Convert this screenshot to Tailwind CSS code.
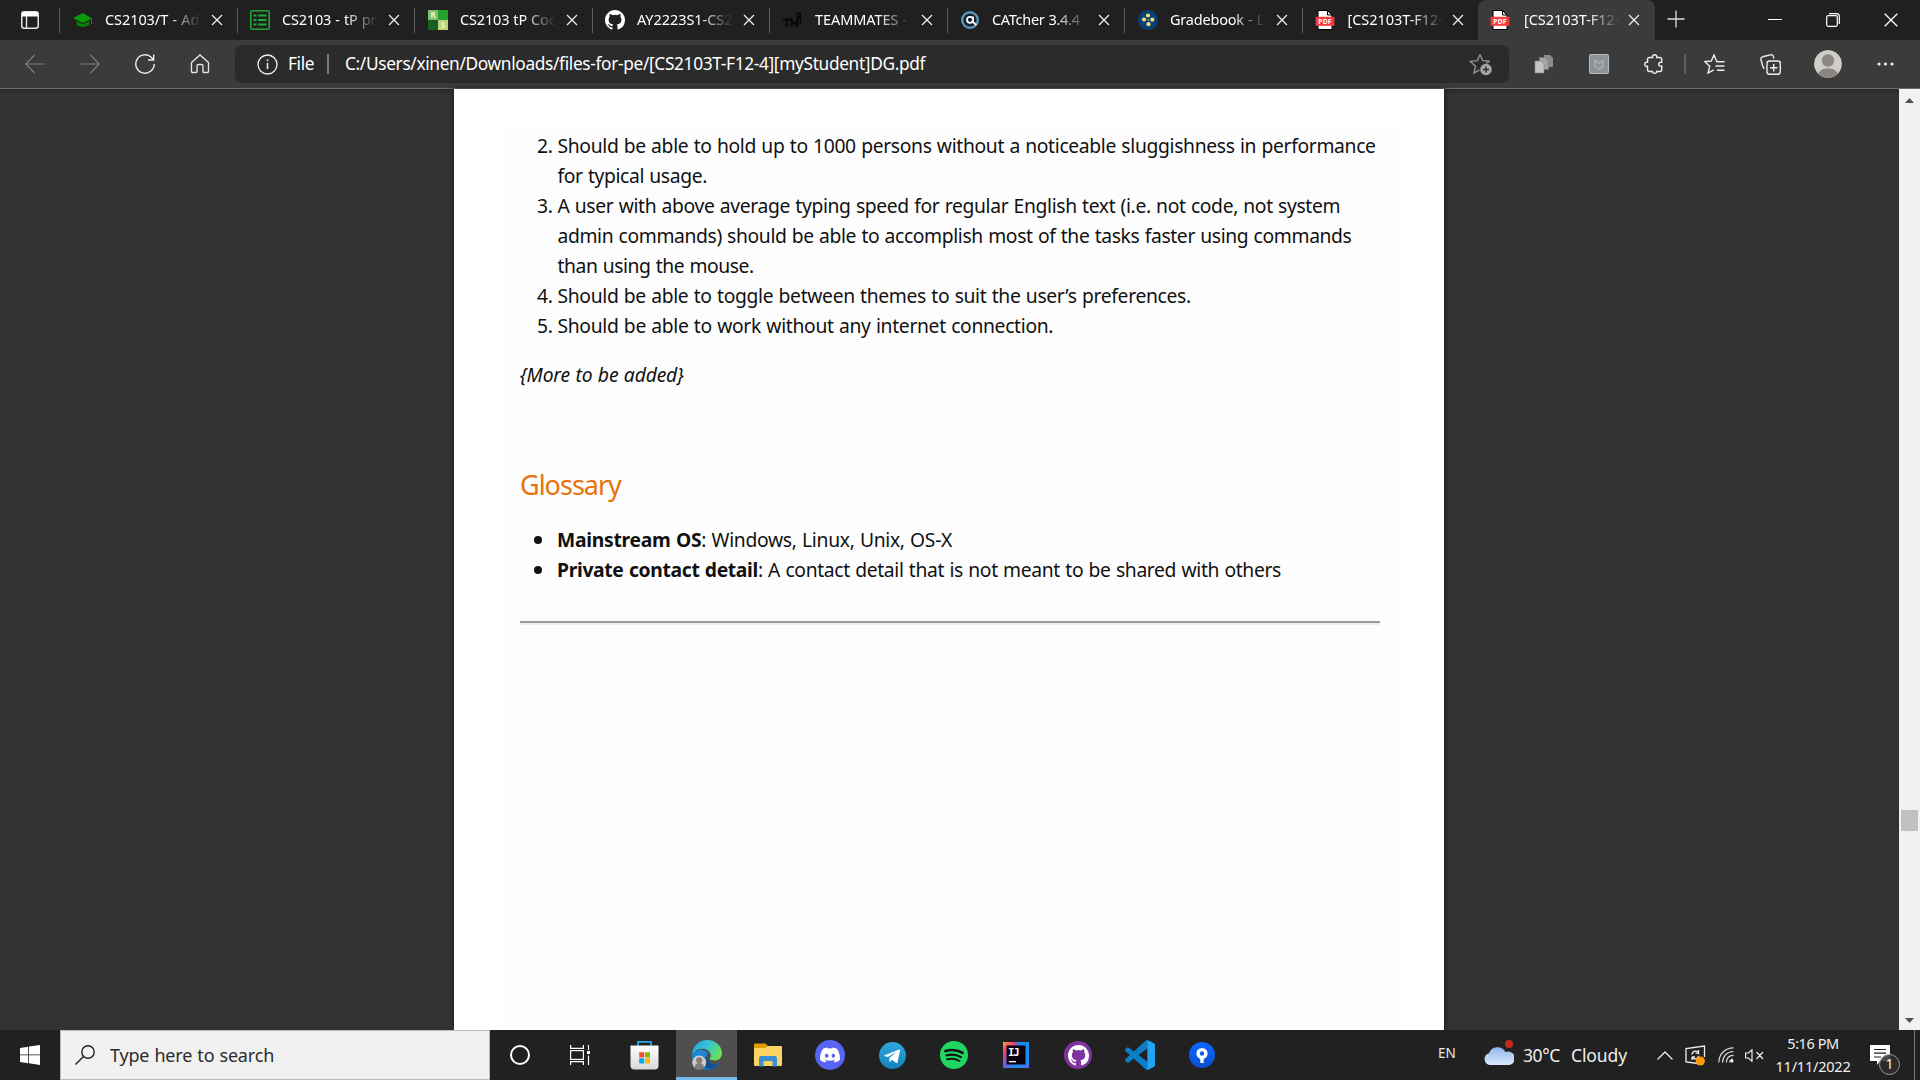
<!DOCTYPE html>
<html lang="en">
<head>
<meta charset="utf-8">
<title>[CS2103T-F12-4][myStudent]DG.pdf</title>
<script src="https://cdn.jsdelivr.net/npm/@tailwindcss/browser@4"></script>
</head>
<body class="w-[1920px] h-[1080px] overflow-hidden flex flex-col bg-[#333] font-['Noto_Sans',sans-serif] text-white">

<!-- shared symbols -->
<svg class="hidden">
  <symbol id="x" viewBox="0 0 12 12"><path d="M1 1l10 10M11 1L1 11" stroke="#eee" stroke-width="1.3" fill="none"/></symbol>
  <symbol id="octocat" viewBox="0 0 16 16"><path d="M8 0C3.58 0 0 3.58 0 8c0 3.54 2.29 6.53 5.47 7.59.4.07.55-.17.55-.38 0-.19-.01-.82-.01-1.49-2.01.37-2.53-.49-2.69-.94-.09-.23-.48-.94-.82-1.13-.28-.15-.68-.52-.01-.53.63-.01 1.08.58 1.23.82.72 1.21 1.87.87 2.33.66.07-.52.28-.87.51-1.07-1.78-.2-3.64-.89-3.64-3.95 0-.87.31-1.59.82-2.15-.08-.2-.36-1.02.08-2.12 0 0 .67-.21 2.2.82a7.6 7.6 0 014 0c1.53-1.04 2.2-.82 2.2-.82.44 1.1.16 1.92.08 2.12.51.56.82 1.27.82 2.15 0 3.07-1.87 3.75-3.65 3.95.29.25.54.73.54 1.48 0 1.07-.01 1.93-.01 2.2 0 .21.15.46.55.38A8.01 8.01 0 0016 8c0-4.42-3.58-8-8-8z" fill="currentColor"/></symbol>
  <symbol id="pdf" viewBox="0 0 20 20">
    <path d="M3 .5h9.5L17 5v14.5H3z" fill="#fff" stroke="#000"/><path d="M12.500.5V5H17z" fill="#ddd" stroke="#000"/>
    <rect x=".6" y="6.800" width="18.800" height="9" fill="#fb3b3b"/>
    <text x="10" y="13.700" font-size="6.700" font-weight="700" fill="#fff" text-anchor="middle" letter-spacing=".3" font-family="Noto Sans">PDF</text>
  </symbol>
</svg>

<!-- tab strip -->
<header class="h-10 shrink-0 bg-[#202020] flex">
  <div class="w-[59px] flex items-center justify-center">
    <svg class="w-[18px] h-[18px]" viewBox="0 0 18 18"><rect x=".75" y=".75" width="16.5" height="16.5" rx="2.5" fill="none" stroke="#e6e6e6" stroke-width="1.5"/><path d="M1 2.5A2 2 0 013 1h12a2 2 0 012 1.500V5.500H1z" fill="#fff"/><path d="M5.500 5v12.500" stroke="#e6e6e6" stroke-width="1.400"/></svg>
  </div>
  <nav class="flex text-[14.5px] leading-[20px] whitespace-nowrap">
    <div class="w-[177.5px] flex items-center">
      <span class="w-px h-[25px] bg-[#5c5c5c]"></span>
      <svg class="ml-[13px] w-5 h-5 shrink-0" viewBox="0 0 20 20"><path d="M10 3L0 8l10 5 8-4v5h1V8.500z" fill="#0a9a0a"/><path d="M3.500 11v3.500c3 3.200 10 3.200 13 0V11L10 14.300z" fill="#087c08"/></svg>
      <span class="ml-3 pb-0.5 w-[96px] overflow-hidden tracking-[-0.08px] [word-spacing:0.6px] mask-r-from-65% mask-r-to-100%">CS2103/T - Ad</span>
      <svg class="ml-[10px] w-3 h-3"><use href="#x"/></svg>
    </div>
    <div class="w-[177.5px] flex items-center">
      <span class="w-px h-[25px] bg-[#5c5c5c]"></span>
      <svg class="ml-[12.500px] w-5 h-5 shrink-0" viewBox="0 0 20 20" fill="none" stroke="#1fa83a" stroke-width="1.500"><rect x=".75" y=".75" width="18.500" height="18.500" rx="1"/><path d="M3.500 5.500h3M8 5.500h8.500M3.500 10h3M8 10h8.500M3.500 14.500h3M8 14.500h8.500" stroke-width="1.800"/></svg>
      <span class="ml-3 pb-0.5 w-[96px] overflow-hidden tracking-[-0.2px] [word-spacing:0.6px] mask-r-from-65% mask-r-to-100%">CS2103 - tP pr</span>
      <svg class="ml-[10px] w-3 h-3"><use href="#x"/></svg>
    </div>
    <div class="w-[177.5px] flex items-center">
      <span class="w-px h-[25px] bg-[#5c5c5c]"></span>
      <svg class="ml-[13px] w-5 h-5 shrink-0" viewBox="0 0 20 20"><rect width="10" height="10" fill="#7fbf6c"/><rect x="10" width="10" height="10" fill="#27a02e"/><rect y="10" width="10" height="10" fill="#175f22"/><rect x="10" y="10" width="10" height="10" fill="#b9d57a"/><g font-size="8" font-weight="700" fill="#e4f5d8" text-anchor="middle" font-family="Noto Sans"><text x="5" y="8">R</text><text x="15" y="18">S</text></g></svg>
      <span class="ml-3 pb-0.5 w-[96px] overflow-hidden tracking-[-0.16px] [word-spacing:0.4px] mask-r-from-65% mask-r-to-100%">CS2103 tP Coc</span>
      <svg class="ml-[10px] w-3 h-3"><use href="#x"/></svg>
    </div>
    <div class="w-[177.5px] flex items-center">
      <span class="w-px h-[25px] bg-[#5c5c5c]"></span>
      <svg class="ml-[12.500px] w-5 h-5 shrink-0"><use href="#octocat"/></svg>
      <span class="ml-3 pb-0.5 w-[96px] overflow-hidden tracking-[-0.06px] mask-r-from-65% mask-r-to-100%">AY2223S1-CS2</span>
      <svg class="ml-[10px] w-3 h-3"><use href="#x"/></svg>
    </div>
    <div class="w-[177.5px] flex items-center">
      <span class="w-px h-[25px] bg-[#5c5c5c]"></span>
      <svg class="ml-[13px] w-5 h-5 shrink-0" viewBox="0 0 20 20"><g fill="none" stroke="#060606" stroke-width="1.900"><path d="M0 9.500h7.500M3.700 9.500V17M8.500 17V10l3 4.500 3-4.500v7"/><circle cx="16" cy="5" r="1.700" stroke-width="1.500"/><path d="M13 9.300c1.500-1.600 4.500-1.600 6 0M17.500 9v5" stroke-width="1.300"/></g></svg>
      <span class="ml-3 pb-0.5 w-[96px] overflow-hidden tracking-[-0.08px] [word-spacing:0.6px] mask-r-from-65% mask-r-to-100%">TEAMMATES -</span>
      <svg class="ml-[10px] w-3 h-3"><use href="#x"/></svg>
    </div>
    <div class="w-[177.5px] flex items-center">
      <span class="w-px h-[25px] bg-[#5c5c5c]"></span>
      <svg class="ml-[12.500px] w-5 h-5 shrink-0" viewBox="0 0 20 20"><circle cx="10" cy="10" r="7.800" fill="#16222b" stroke="#5b96bd" stroke-width="2.400"/><g fill="none" stroke="#fff" stroke-width="1.800"><circle cx="10" cy="9.800" r="3"/><path d="M13 6.500V12l3.300 3"/></g></svg>
      <span class="ml-3 pb-0.5 w-[96px] overflow-hidden tracking-[-0.3px] [word-spacing:0.6px] mask-r-from-65% mask-r-to-100%">CATcher 3.4.4 -</span>
      <svg class="ml-[10px] w-3 h-3"><use href="#x"/></svg>
    </div>
    <div class="w-[177.5px] flex items-center">
      <span class="w-px h-[25px] bg-[#5c5c5c]"></span>
      <svg class="ml-[13px] w-5 h-5 shrink-0" viewBox="0 0 20 20"><circle cx="10" cy="10" r="10" fill="#073e7c"/><g fill="#f6dc63"><circle cx="10" cy="5.500" r="2.100"/><circle cx="6" cy="9.500" r="2.100"/><circle cx="14.300" cy="9.700" r="2.100"/><circle cx="10.500" cy="14.200" r="2.100"/><circle cx="10.200" cy="10" r=".7"/></g></svg>
      <span class="ml-3 pb-0.5 w-[96px] overflow-hidden tracking-[-0.2px] [word-spacing:0.6px] mask-r-from-65% mask-r-to-100%">Gradebook - L</span>
      <svg class="ml-[10px] w-3 h-3"><use href="#x"/></svg>
    </div>
    <div class="w-[176.500px] flex items-center">
      <span class="w-px h-[25px] bg-[#5c5c5c]"></span>
      <svg class="ml-[12px] w-5 h-5 shrink-0"><use href="#pdf"/></svg>
      <span class="ml-[13px] pb-0.5 w-[96px] overflow-hidden tracking-[-0.05px] mask-r-from-65% mask-r-to-100%">[CS2103T-F12-</span>
      <svg class="ml-[8.500px] w-3 h-3"><use href="#x"/></svg>
    </div>
    <div class="w-[177px] flex items-center bg-[#3b3b3b] rounded-t-lg">
      <svg class="ml-[12px] w-5 h-5 shrink-0"><use href="#pdf"/></svg>
      <span class="ml-[14px] pb-0.5 w-[96px] overflow-hidden tracking-[-0.05px] mask-r-from-65% mask-r-to-100%">[CS2103T-F12-</span>
      <svg class="ml-[8px] w-3 h-3"><use href="#x"/></svg>
    </div>
  </nav>
  <svg class="ml-[12px] mt-[10px] w-[18px] h-[18px]" viewBox="0 0 18 18" stroke="#ddd" stroke-width="1.300"><path d="M9 .5v17M.5 9h17"/></svg>
  <div class="ml-auto flex items-center pr-[22px] gap-[44px]">
    <svg class="w-[14px] h-[14px]" viewBox="0 0 14 14"><path d="M0 6.500h14" stroke="#fff" stroke-width="1"/></svg>
    <svg class="w-[14px] h-[14px]" viewBox="0 0 14 14" fill="none" stroke="#fff" stroke-width="1.200"><rect x=".7" y="2.700" width="10.600" height="10.600" rx="1.500"/><path d="M3 .7h7.500A2.800 2.800 0 0113.300 3.500V11"/></svg>
    <svg class="w-[14px] h-[14px]" viewBox="0 0 14 14" stroke="#fff" stroke-width="1.300"><path d="M.7.7l12.600 12.600M13.300.7L.7 13.300"/></svg>
  </div>
</header>

<!-- toolbar -->
<div class="h-[49px] shrink-0 bg-[#3b3b3b] border-b border-[#6b6b6b] flex items-center">
  <div class="flex pl-[7.5px] w-[235px] shrink-0">
    <div class="w-[55px] flex justify-center"><svg class="w-5 h-5" viewBox="0 0 20 20" fill="none" stroke="#7d7d7d" stroke-width="1.200"><path d="M20 10H.8M9.500 1L.8 10l8.700 9"/></svg></div>
    <div class="w-[55px] flex justify-center"><svg class="w-5 h-5" viewBox="0 0 20 20" fill="none" stroke="#7d7d7d" stroke-width="1.200"><path d="M0 10h19.200M10.500 1l8.700 9-8.700 9"/></svg></div>
    <div class="w-[55px] flex justify-center"><svg class="w-5 h-5" viewBox="0 0 20 20" fill="none" stroke="#eee" stroke-width="1.400"><path d="M19.200 10A9.200 9.200 0 1 1 16.500 3.500L18.500 5.700M18.700 .5V6H13"/></svg></div>
    <div class="w-[55px] flex justify-center"><svg class="w-5 h-5" viewBox="0 0 20 20" fill="none" stroke="#e4e4e4" stroke-width="1.400"><path d="M1.500 8.500L10 1l8.500 7.500V17.500a1 1 0 01-1 1h-3.500a1 1 0 01-1-1V12a1.500 1.500 0 00-1.500-1.500h-3A1.500 1.500 0 007 12v5.500a1 1 0 01-1 1H2.500a1 1 0 01-1-1z"/></svg></div>
  </div>
  <div class="w-[1274px] h-[38px] shrink-0 rounded-[6px] bg-[#2b2b2b] flex items-center text-[17.3px] whitespace-nowrap">
    <svg class="ml-[22px] w-[21px] h-[21px]" viewBox="0 0 21 21" fill="none" stroke="#eee" stroke-width="1.300"><circle cx="10.500" cy="10.500" r="9.500"/><path d="M10.500 9v6M10.500 5.500v1.800" stroke-width="1.500"/></svg>
    <span class="ml-[10px] w-[39px] tracking-[-0.35px]">File</span>
    <span class="w-[2px] h-5 bg-[#777]"></span>
    <span class="ml-[16px] tracking-[-0.34px]">C:/Users/xinen/Downloads/files-for-pe/[CS2103T-F12-4][myStudent]DG.pdf</span>
    <svg class="ml-auto mr-[17px] w-[23px] h-[23px]" viewBox="0 0 23 23"><path d="M11 1.500l2.700 6.200 7 .5M11 1.500L8.300 7.700l-7 .7 5.200 4.800-1.600 7 5.500-3.300M17 10.500l3.700-2.300" fill="none" stroke="#9a9a9a" stroke-width="1.300"/><circle cx="17" cy="16.500" r="5.800" fill="#a5a5a5"/><path d="M17 13.500v6M14 16.500h6" stroke="#2b2b2b" stroke-width="1.400"/></svg>
  </div>
  <div class="flex items-center pl-[7.5px]">
    <div class="w-[55px] flex justify-center"><svg class="w-5 h-5" viewBox="0 0 20 20"><path d="M10 1h6l3 3v9h-9z" fill="#8b8b8b"/><path d="M5.500 3.500h6l3 3v9h-9z" fill="#a2a2a2" stroke="#777" stroke-width=".6"/><path d="M1 7h6l3 3v9H1z" fill="#c4c4c4" stroke="#888" stroke-width=".6"/></svg></div>
    <div class="w-[55px] flex justify-center"><svg class="w-5 h-5" viewBox="0 0 20 20"><rect x=".5" y=".5" width="19" height="19" rx="1" fill="#8e9396" stroke="#b5babd"/><path d="M6 6.500l4 2.500 4-2.500v6L10 15l-4-2.500z" fill="none" stroke="#a6aeb2" stroke-width="1.500"/></svg></div>
    <div class="w-[55px] flex justify-center"><svg class="w-5 h-5" viewBox="0 0 20 20" fill="none" stroke="#eee" stroke-width="1.400"><path d="M5.500 3.500h3c-.8-3.600 5-3.600 4.200 0h3a2 2 0 012 2v2.800c-4-.8-4 4.600 0 3.800v3.400a2 2 0 01-2 2h-3c.6 2.300-4.800 2.300-4.200 0h-3a2 2 0 01-2-2v-3.200c-3.800.8-3.800-4.900 0-4.100V5.500a2 2 0 012-2z"/></svg></div>
    <span class="w-[2px] h-5 ml-[2px] bg-[#5e5e5e]"></span>
    <div class="w-[56px] ml-px flex justify-center"><svg class="w-[21px] h-5" viewBox="0 0 21 20" fill="none" stroke="#eee" stroke-width="1.400"><path d="M13.500 7.300L12.500 7 10 1 7.300 7l-6.500.6 4.900 4.700L4 19l5.700-3.200M12.500 7.700h8M11.500 12h9M13 16.300h7.500"/></svg></div>
    <div class="w-[55px] flex justify-center"><svg class="w-[21px] h-[21px]" viewBox="0 0 21 21" fill="none" stroke="#eee" stroke-width="1.400"><rect x="7" y="7" width="13.300" height="13.300" rx="2.500"/><path d="M13.700 10v7.500M10 13.700h7.500M4.500 14.500c-1-.5-1.300-1-1.600-2L.9 5.500C.6 4 1.200 3.200 2.500 2.800L10.500.9c1.500-.4 2.500.2 2.800 1.500l.6 2.100"/></svg></div>
    <div class="w-[60px] flex justify-center"><svg class="w-7 h-7" viewBox="0 0 28 28"><defs><clipPath id="av"><circle cx="14" cy="14" r="14"/></clipPath></defs><g clip-path="url(#av)"><circle cx="14" cy="14" r="14" fill="#d0cdc9"/><circle cx="14" cy="10.500" r="6.200" fill="#8c8783"/><path d="M3 28c0-13 22-13 22 0z" fill="#8c8783"/></g></svg></div>
    <div class="w-[55px] flex justify-center"><svg class="w-[17px] h-1" viewBox="0 0 17 4" fill="#eee"><circle cx="2" cy="2" r="1.600"/><circle cx="8.500" cy="2" r="1.600"/><circle cx="15" cy="2" r="1.600"/></svg></div>
  </div>
</div>

<!-- document viewer -->
<main class="flex-1 min-h-0 flex">
  <div class="w-[454px] shrink-0 shadow-[inset_0_4px_5px_-3px_#252525]"></div>
  <article class="w-[990px] bg-white pt-[41px] pl-[47px] shadow-[0_0_6px_#1c1c1c]">
    <div class="w-[898px] h-full bg-[#fdfdfd] pl-[19px] pt-px text-[19.3px] leading-[30px] text-[#111] whitespace-nowrap [word-spacing:0.65px]">
      <ol class="flex flex-col">
        <li class="flex"><span class="w-[37.500px] pl-[17px] tracking-[-0.3px]">2.</span><div><p class="tracking-[-0.335px]">Should be able to hold up to 1000 persons without a noticeable sluggishness in performance</p><p class="tracking-[-0.37px]">for typical usage.</p></div></li>
        <li class="flex"><span class="w-[37.500px] pl-[17px] tracking-[-0.3px]">3.</span><div><p class="tracking-[-0.349px]">A user with above average typing speed for regular English text (i.e. not code, not system</p><p class="tracking-[-0.368px]">admin commands) should be able to accomplish most of the tasks faster using commands</p><p class="tracking-[-0.42px]">than using the mouse.</p></div></li>
        <li class="flex"><span class="w-[37.500px] pl-[17px] tracking-[-0.3px]">4.</span><p class="tracking-[-0.33px]">Should be able to toggle between themes to suit the user’s preferences.</p></li>
        <li class="flex"><span class="w-[37.500px] pl-[17px] tracking-[-0.3px]">5.</span><p class="tracking-[-0.32px]">Should be able to work without any internet connection.</p></li>
      </ol>
      <p class="mt-[19px] italic tracking-[-0.16px]">{More to be added}</p>
      <h2 class="mt-[74px] text-[27px] leading-[42px] tracking-[-1px] text-[#e8730c]">Glossary</h2>
      <ul class="mt-[19px]">
        <li class="flex items-center"><span class="ml-[14px] mr-[15px] w-2 h-2 rounded-full bg-[#111]"></span><b class="tracking-[-0.26px]">Mainstream OS</b><span class="tracking-[-0.3px]">: Windows, Linux, Unix, OS-X</span></li>
        <li class="flex items-center"><span class="ml-[14px] mr-[15px] w-2 h-2 rounded-full bg-[#111]"></span><b class="tracking-[-0.32px]">Private contact detail</b><span class="tracking-[-0.345px]">: A contact detail that is not meant to be shared with others</span></li>
      </ul>
      <div class="mt-[36px] w-[860px] h-[4px] bg-[#eee] border-t-2 border-[#999]"></div>
    </div>
  </article>
  <div class="flex-1 shadow-[inset_0_4px_5px_-3px_#252525]"></div>
  <div class="w-[21px] bg-[#f1f1f1] flex flex-col items-center">
    <svg class="mt-[9px] w-[9px] h-[5px]" viewBox="0 0 9 5"><path d="M0 5L4.500 0 9 5z" fill="#505050"/></svg>
    <div class="mt-[707px] w-[17px] h-[21px] bg-[#c1c1c1]"></div>
    <svg class="mt-auto mb-[7px] w-[9px] h-[5px]" viewBox="0 0 9 5"><path d="M0 0l4.500 5L9 0z" fill="#505050"/></svg>
  </div>
</main>

<!-- taskbar -->
<footer class="h-[50px] shrink-0 bg-[#212121] flex whitespace-nowrap">
  <div class="w-[60px] flex items-center justify-center"><svg class="w-5 h-5" viewBox="0 0 20 20" fill="#fff"><path d="M0 2.900L8.200 1.700v7.800H0zM9 1.600L20 0v9.500H9zM0 10.300h8.200v7.900L0 17zM9 10.300h11V20L9 18.300z"/></svg></div>
  <div class="w-[430px] bg-[#f1f1f1] border border-[#b9b9b9] flex items-center text-[#2b2b2b] text-[18px]">
    <svg class="ml-[14px] w-5 h-5" viewBox="0 0 20 20" fill="none" stroke="#222" stroke-width="1.400"><circle cx="13" cy="7" r="6.200"/><path d="M8.500 11.500L.5 19.500"/></svg>
    <span class="ml-[15px] tracking-[-0.18px] [word-spacing:0.6px]">Type here to search</span>
  </div>
  <div class="w-[60px] flex items-center justify-center"><span class="w-5 h-5 rounded-full border-[2.5px] border-white"></span></div>
  <div class="w-[60px] flex items-center justify-center"><svg class="w-[21px] h-5" viewBox="0 0 21 20" fill="none" stroke="#fff" stroke-width="1.200"><rect x=".6" y="5.600" width="12.800" height="8.800"/><path d="M.6 0v3.400h12.800V0M.6 20v-3.400h12.800V20M18.500 0v5M18.500 10.500V20"/><path d="M17 6h3v3h-3z" fill="#fff" stroke="none"/></svg></div>
  <div class="w-[62px] ml-[3px] mr-px flex items-center justify-center"><svg class="w-[29px] h-[30px]" viewBox="0 0 30 30" preserveAspectRatio="none"><defs><linearGradient id="st" x2="0" y2="1"><stop stop-color="#fff"/><stop offset="1" stop-color="#d8d8d8"/></linearGradient></defs><path d="M8.300 6V1.800h13.400V6" fill="none" stroke="#28a8ea" stroke-width="1.800"/><path d="M.5 5.500h29V25.500a4 4 0 01-4 4h-21a4 4 0 01-4-4z" fill="url(#st)"/><path d="M9.500 12.300h5.200v5.200H9.500z" fill="#f25022"/><path d="M15.500 12.300h5.200v5.200h-5.200z" fill="#7fba00"/><path d="M9.500 18.300h5.200v5.200H9.500z" fill="#00a4ef"/><path d="M15.500 18.300h5.200v5.200h-5.200z" fill="#ffb900"/></svg></div>
  <div class="w-[61px] bg-[#4f4f4f] border-b-[3px] border-[#76b9ed] flex justify-center pt-[10px]">
    <svg class="w-[30px] h-[30px]" viewBox="0 0 30 30"><defs><linearGradient id="e1" x1="0" y1=".2" x2="1" y2=".6"><stop stop-color="#2aa6e4"/><stop offset=".5" stop-color="#36c5d0"/><stop offset="1" stop-color="#69e34c"/></linearGradient><linearGradient id="e2" x2=".3" y2="1"><stop stop-color="#1f8fd9"/><stop offset="1" stop-color="#1572c4"/></linearGradient></defs>
    <path d="M0 15a15 15 0 0015 15c5 0 9.500-2.200 12-6.500-4 1.500-9 1-11.500-2.500-2-3-1.500-5.500.5-7.500-3-5.500-14-4.500-16 1.500z" fill="url(#e2)"/>
    <path d="M9.500 19c0 6 4 9.500 9.500 9.800 3.500-.8 6.300-2.500 8.300-5.300-6 2.300-12.500-.5-12.500-6.300z" fill="#14508f"/>
    <path d="M0 14C.8 6 7.200 0 15 0c9 0 15 6.500 15 13 0 5-3.800 7.500-7.500 7.500-3 0-5-1-4.700-2 .6-1 1.200-2 1-3.500C18 7.500 6 6 0 14z" fill="url(#e1)"/>
    <circle cx="7.200" cy="22.500" r="7" fill="#cfccc9"/><circle cx="7.200" cy="20.300" r="3.100" fill="#827d79"/><path d="M2.500 27.500c0-6 9.500-6 9.500 0-2.500 2.500-7 2.500-9.500 0z" fill="#827d79"/></svg>
  </div>
  <div class="w-[62px] flex items-center justify-center"><svg class="w-7 h-6" viewBox="0 0 28 24"><path d="M0 1.500A1 1 0 011 .5h10.500l3 3H27a1 1 0 011 1V7H0z" fill="#e19c00"/><path d="M0 5h11l3-2h13a1 1 0 011 1v18a1 1 0 01-1 1H1a1 1 0 01-1-1z" fill="#fcd462"/><path d="M5 23.500V15a2 2 0 012-2h14a2 2 0 012 2v8.500h-4.500V18h-9v5.500z" fill="#3c8fd3"/></svg></div>
  <div class="w-[62px] flex items-center justify-center"><div class="w-[30px] h-[30px] rounded-full bg-[#5865f2] flex items-center justify-center"><svg class="w-5 h-5" viewBox="0 0 24 24" fill="#fff"><path d="M20.317 4.370a19.790 19.790 0 00-4.885-1.515.074.074 0 00-.079.037c-.210.375-.444.864-.608 1.250a18.270 18.270 0 00-5.487 0 12.640 12.640 0 00-.617-1.250.077.077 0 00-.079-.037A19.740 19.740 0 003.677 4.370a.070.070 0 00-.032.028C.533 9.046-.320 13.580.099 18.058a.082.082 0 00.031.056 19.900 19.900 0 005.993 3.030.078.078 0 00.084-.028c.462-.630.874-1.295 1.226-1.994a.076.076 0 00-.042-.106 13.100 13.100 0 01-1.872-.892.077.077 0 01-.008-.128c.126-.094.252-.192.372-.291a.074.074 0 01.078-.010c3.928 1.793 8.180 1.793 12.062 0a.074.074 0 01.079.009c.120.099.246.198.373.292a.077.077 0 01-.007.128 12.300 12.300 0 01-1.873.891.077.077 0 00-.041.107c.360.698.772 1.363 1.225 1.993a.076.076 0 00.084.029 19.840 19.840 0 006.002-3.030.077.077 0 00.032-.055c.500-5.177-.838-9.674-3.549-13.660a.061.061 0 00-.031-.029zM8.020 15.331c-1.183 0-2.157-1.086-2.157-2.419s.956-2.419 2.157-2.419c1.210 0 2.176 1.095 2.157 2.419 0 1.333-.956 2.419-2.157 2.419zm7.975 0c-1.183 0-2.157-1.086-2.157-2.419s.955-2.419 2.157-2.419c1.210 0 2.176 1.095 2.157 2.419 0 1.333-.946 2.419-2.157 2.419z"/></svg></div></div>
  <div class="w-[62px] flex items-center justify-center"><svg class="w-[27px] h-[27px]" viewBox="0 0 27 27"><defs><linearGradient id="tg" x2="0" y2="1"><stop stop-color="#2fa8df"/><stop offset="1" stop-color="#1281bb"/></linearGradient></defs><circle cx="13.500" cy="13.500" r="13.500" fill="url(#tg)"/><path d="M5 13.500L20 7.500c.7-.2 1.200.2 1 1.200l-2.500 11.500c-.2.900-.8 1-1.500.6l-4-3-2 1.900c-.3.300-.7.200-.7-.2l.2-3.500 7-6.300-8.600 5.400-3.800-1.200z" fill="#fff"/></svg></div>
  <div class="w-[62px] flex items-center justify-center"><svg class="w-7 h-7" viewBox="0 0 28 28"><circle cx="14" cy="14" r="14" fill="#1fd760"/><g fill="none" stroke="#151515" stroke-linecap="round"><path d="M5.500 10c5.500-1.600 12-1 17 1.800" stroke-width="2.700"/><path d="M6.500 14.300c4.800-1.300 10.300-.7 14.500 1.800" stroke-width="2.200"/><path d="M7 18.300c4.300-1 8.800-.5 12.500 1.700" stroke-width="1.900"/></g></svg></div>
  <div class="w-[62px] flex items-center justify-center"><svg class="w-[26px] h-[26px]" viewBox="0 0 26 26"><defs><linearGradient id="ij" y1="0" x2="1" y2="1"><stop stop-color="#fca044"/><stop offset=".22" stop-color="#f0426a"/><stop offset=".45" stop-color="#7a5bd6"/><stop offset=".7" stop-color="#1f8df2"/><stop offset="1" stop-color="#5a6af0"/></linearGradient></defs><path d="M0 0h26v26H0z" fill="url(#ij)"/><path d="M13 0h13v22l-6-2z" fill="#178df0"/><path d="M3.500 3.500h19v19h-19z" fill="#0b0210"/><path d="M6 19h7v1.300H6z" fill="#fff"/><text x="5" y="13.500" font-size="10.500" font-weight="700" fill="#fff" font-family="DejaVu Sans Mono" letter-spacing="-1">IJ</text></svg></div>
  <div class="w-[62px] flex items-center justify-center"><div class="w-7 h-7 rounded-full bg-[#7e349f] flex items-center justify-center"><svg class="w-[21px] h-[21px]"><use href="#octocat"/></svg></div></div>
  <div class="w-[62px] flex items-center justify-center"><svg class="w-[30px] h-[30px]" viewBox="0 0 24 24"><path d="M23.150 2.587L18.210.210a1.494 1.494 0 00-1.705.290l-9.460 8.630-4.120-3.128a.999.999 0 00-1.276.057L.327 7.261A1 1 0 00.326 8.740L3.899 12 .326 15.260a1 1 0 00.001 1.479L1.650 17.940a.999.999 0 001.276.057l4.120-3.128 9.460 8.630a1.492 1.492 0 001.704.290l4.942-2.377A1.500 1.500 0 0024 20.060V3.939a1.500 1.500 0 00-.850-1.352zm-5.146 14.861L10.826 12l7.178-5.448v10.896z" fill="#0a7fc8"/><path d="M18 .1l5.150 2.487A1.500 1.500 0 0124 3.939V20.060a1.500 1.500 0 01-.850 1.352L18 23.900z" fill="#24a3ee"/></svg></div>
  <div class="w-[62px] flex items-center justify-center"><svg class="w-[26px] h-[26px]" viewBox="0 0 26 26"><defs><linearGradient id="so" x2="0" y2="1"><stop stop-color="#0a68ff"/><stop offset="1" stop-color="#0a4fce"/></linearGradient></defs><circle cx="13" cy="13" r="13" fill="url(#so)"/><circle cx="13" cy="11.500" r="3.900" fill="none" stroke="#fff" stroke-width="3.400"/><path d="M11.300 15h3.400v6h-3.400z" fill="#fff"/></svg></div>
  <div class="ml-auto flex items-center">
    <span class="text-[13.5px] leading-[20px] tracking-[-0.1px] w-[45px] -mt-[5px] text-[#ececec]">EN</span>
    <div class="w-[32px] h-full relative"><svg class="w-[31px] h-[21px] mt-[15px]" viewBox="0 0 31 21"><defs><linearGradient id="cl" x2="0" y2="1"><stop stop-color="#8fb4ee"/><stop offset="1" stop-color="#dce8fb"/></linearGradient></defs><path d="M6.500 20A6 6 0 016 8.300 9 9 0 0122.500 7 6.800 6.800 0 1124 20z" fill="url(#cl)"/></svg><span class="absolute left-[22px] top-[10px] w-2 h-2 rounded-full bg-[#c92b1b]"></span></div>
    <span class="ml-2 w-[48px] text-[17.5px] leading-[24px] tracking-[-0.4px] text-[#eee]">30°C</span>
    <span class="w-[86px] text-[17.5px] leading-[24px] tracking-[-0.12px] text-[#eee]">Cloudy</span>
    <svg class="w-4 h-[9px]" viewBox="0 0 16 9" fill="none" stroke="#eee" stroke-width="1.300"><path d="M.5 8.500L8 1l7.500 7.500"/></svg>
    <svg class="ml-3 w-[21px] h-[21px]" viewBox="0 0 21 21" fill="none" stroke="#eee" stroke-width="1.300"><path d="M13 18.500L1 17V3.500L19.500 1v11"/><path d="M7 9.500c.5-4 5-4.200 6.500-1.500V5M13.500 8.200H10.700M13.500 11c-.8 3.500-5 4-6.500 1.200V15M7 12h3"/><circle cx="15.300" cy="16" r="4.600" fill="#ff9a0a" stroke="none"/></svg>
    <svg class="ml-3 w-4 h-4" viewBox="0 0 16 16" fill="none" stroke="#ddd" stroke-width="1.200"><path d="M.8 15.500C1 7 7 1 15.500.8M4.500 15.500c.2-6.500 4.500-10.800 11-11M8.300 15.500c.2-4.200 3-7 7.200-7.200M11.500 15.500c.2-2 1.500-3.300 3.500-3.500"/><circle cx="14" cy="14" r="1.500" fill="#fff" stroke="none"/></svg>
    <svg class="ml-[11px] w-[19px] h-[13px]" viewBox="0 0 19 13" fill="none" stroke="#eee" stroke-width="1.200"><path d="M.6 4h2.800L7 .8v11.400L3.400 9H.6zM11.500 3l6.500 7M18 3l-6.500 7"/></svg>
    <div class="ml-[5px] w-[88px] text-center text-[14.5px] leading-[23px] text-[#f0f0f0]"><div class="tracking-[-0.45px]">5:16 PM</div><div class="tracking-[-0.22px]">11/11/2022</div></div>
    <div class="ml-[13px] w-[44px] h-full relative"><svg class="mt-[15px] w-5 h-5" viewBox="0 0 20 20"><path d="M0 0h20v16H10l-3 4v-4H0z" fill="#fff"/><path d="M4 4.500h12M4 8.200h12M4 12h7" stroke="#212121" stroke-width="1.200"/></svg><span class="absolute left-[9px] top-[24px] w-[21px] h-[21px] rounded-full border border-[#9a9a9a] bg-[#2c2c2c]/85 text-[13.5px] leading-[19px] text-center">1</span></div>
    <span class="w-px h-full bg-[#777] mr-[5px]"></span>
  </div>
</footer>
</body>
</html>
